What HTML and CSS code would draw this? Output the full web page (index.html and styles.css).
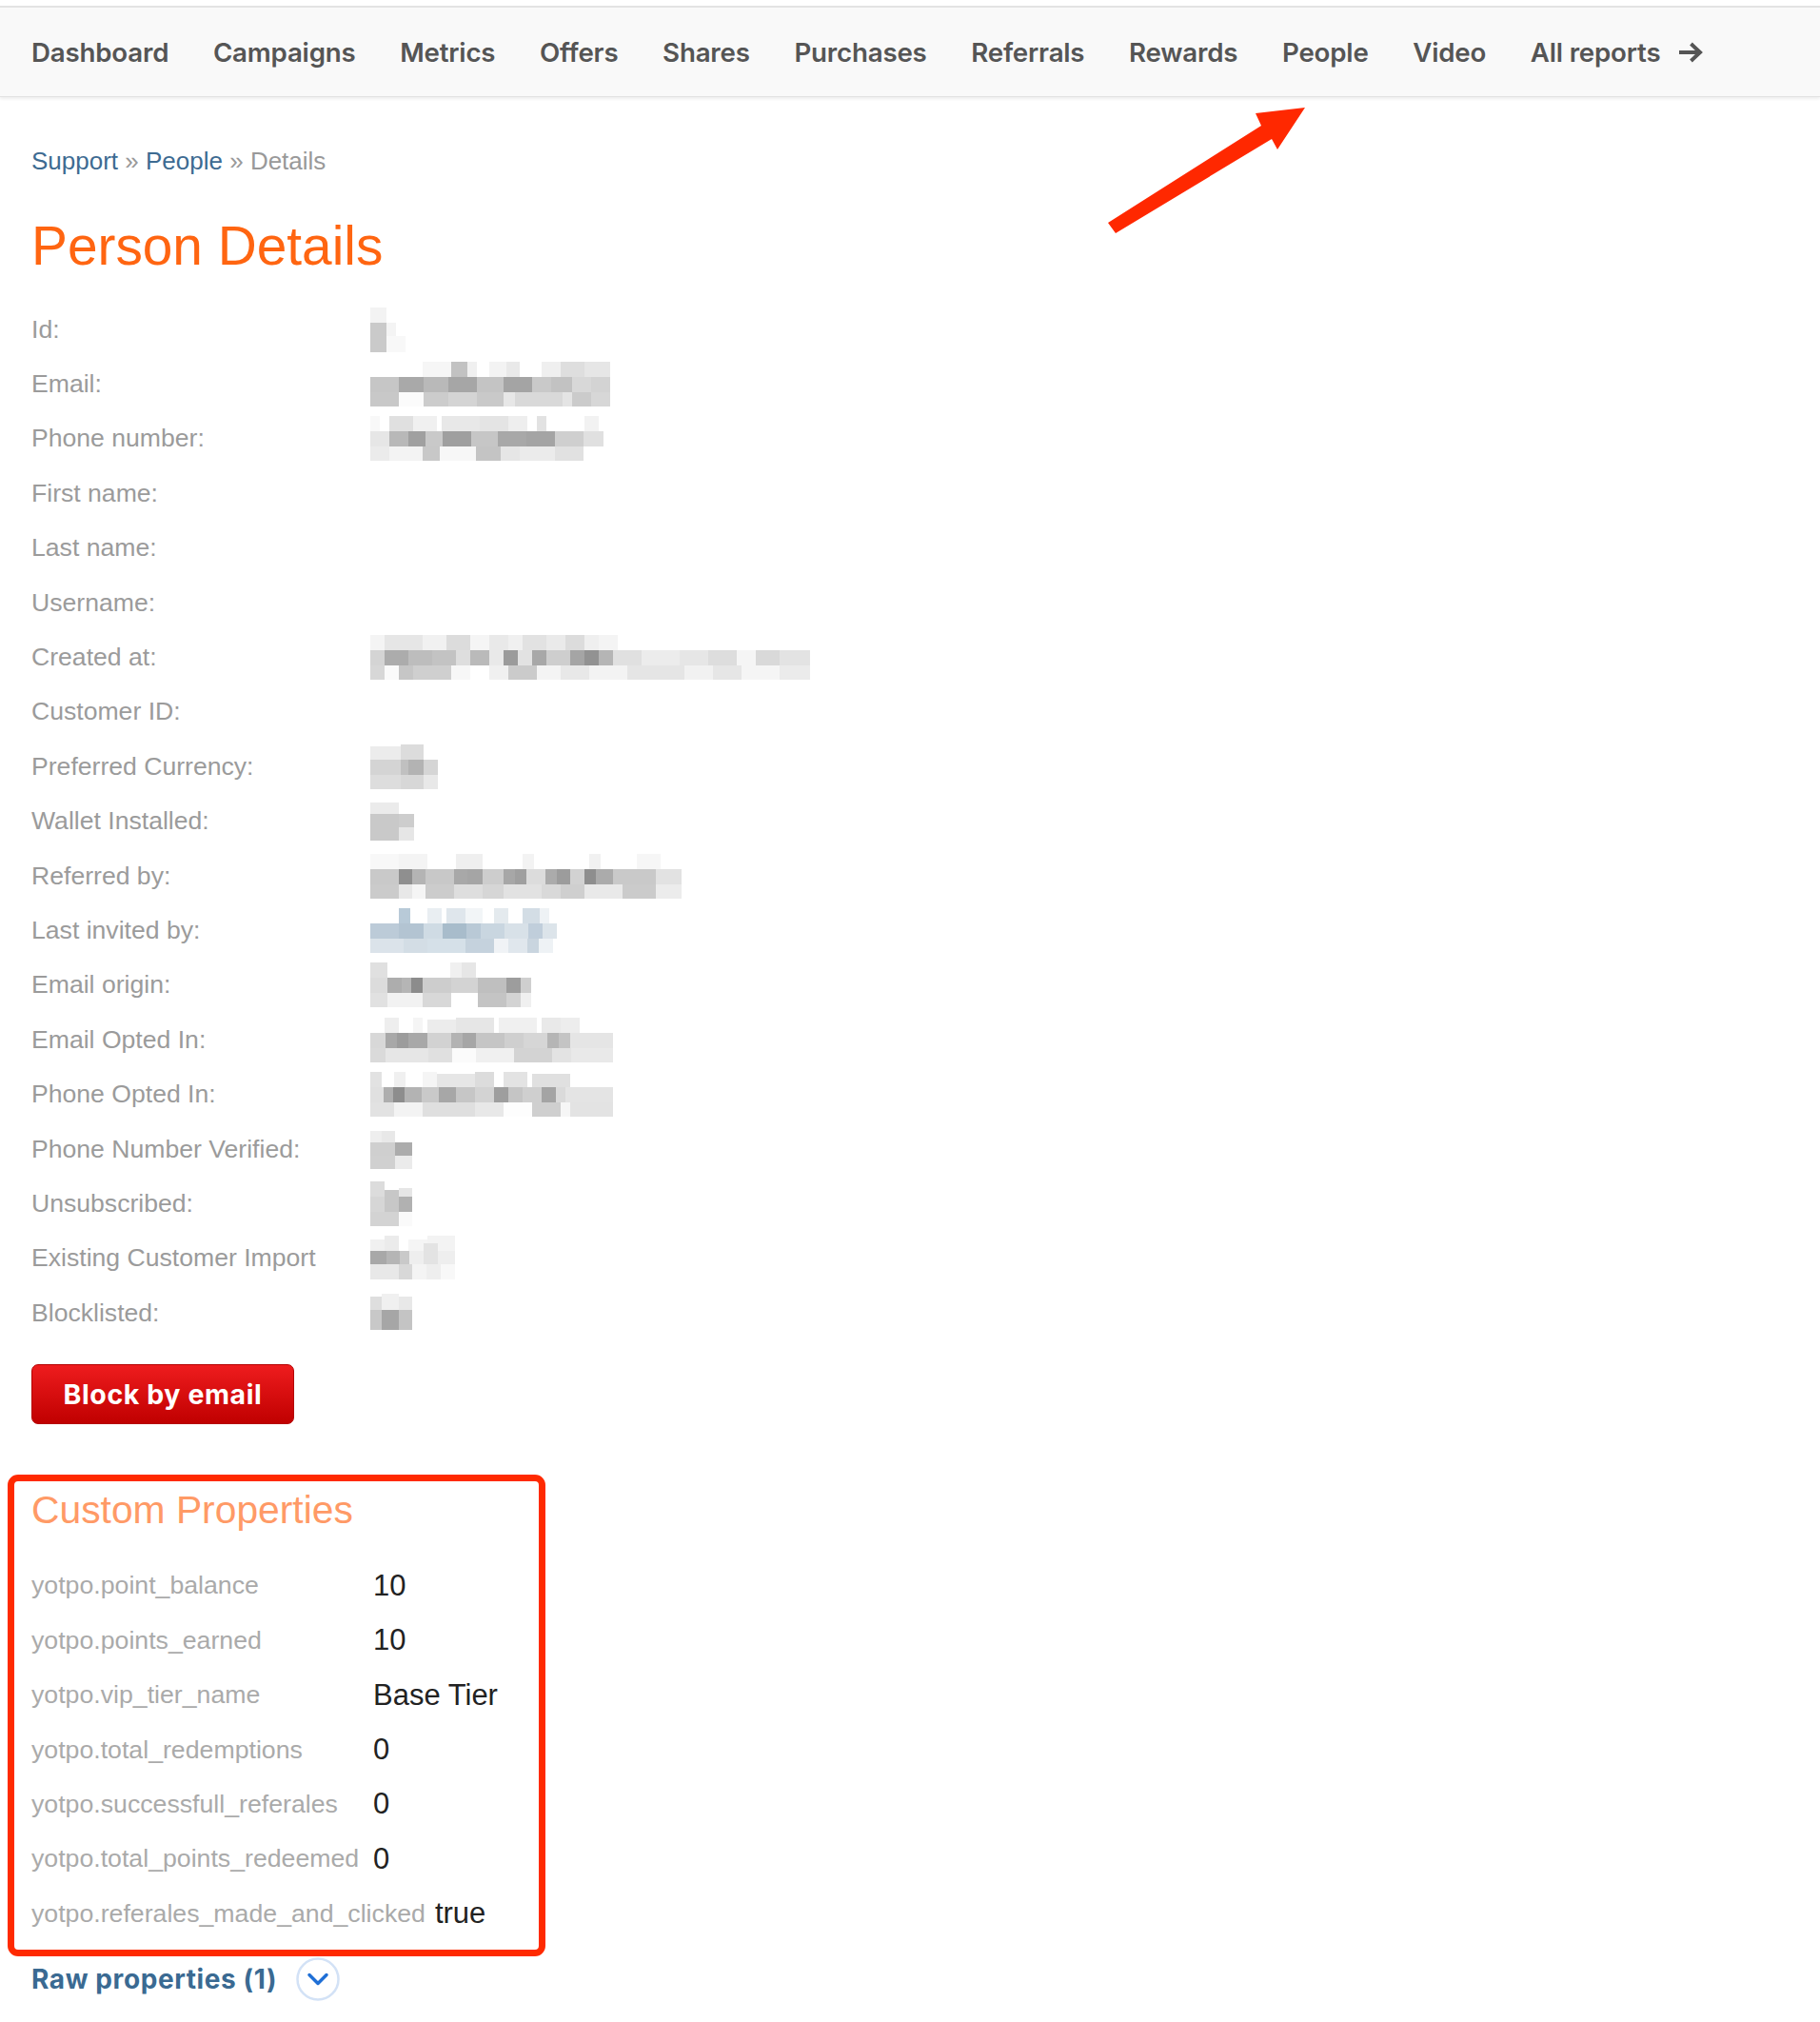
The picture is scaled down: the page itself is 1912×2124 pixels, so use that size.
FILE: index.html
```html
<!DOCTYPE html>
<html lang="en">
<head>
<meta charset="utf-8">
<title>Person Details</title>
<link rel="stylesheet" href="styles.css">
</head>
<body>
<header class="topbar">
  <nav class="nav">
    <a href="#">Dashboard</a>
    <a href="#">Campaigns</a>
    <a href="#">Metrics</a>
    <a href="#">Offers</a>
    <a href="#">Shares</a>
    <a href="#">Purchases</a>
    <a href="#">Referrals</a>
    <a href="#">Rewards</a>
    <a href="#">People</a>
    <a href="#">Video</a>
    <a href="#" class="all-reports">All reports
      <svg class="nav-arrow" viewBox="0 0 26 22" width="26" height="22"><path d="M1 11 H23 M13.5 2 L23 11 L13.5 20" fill="none" stroke="#555" stroke-width="4" stroke-linejoin="miter"/></svg>
    </a>
  </nav>
</header>

<svg class="annot-arrow" width="215" height="142" viewBox="0 0 215 142"><polygon points="4,126 12,137 176,38 182,49 211,5 159,11 165,24" fill="#ff2800"/></svg>

<main class="page">
  <div class="crumbs"><a href="#">Support</a> » <a href="#">People</a> » Details</div>
  <h1 class="title">Person Details</h1>

  <div class="details">
    <div class="row"><span class="label">Id:</span><span class="value"><svg class="blur" width="40" height="47" viewBox="0 0 40 47"><rect x="0" y="0" width="17" height="16" fill="#f3f3f3"/><rect x="0" y="16" width="17" height="31" fill="#cacaca"/><rect x="17" y="16" width="10" height="14" fill="#f4f4f4"/><rect x="17" y="30" width="20" height="17" fill="#f8f8f8"/></svg></span></div>

    <div class="row"><span class="label">Email:</span><span class="value"><svg class="blur" width="252" height="47" viewBox="0 0 252 47">
      <rect x="55" y="0" width="30" height="16" fill="#f6f6f6"/><rect x="85" y="0" width="17" height="16" fill="#c2c2c2"/><rect x="102" y="0" width="10" height="16" fill="#f0f0f0"/><rect x="125" y="0" width="18" height="16" fill="#f3f3f3"/><rect x="143" y="0" width="14" height="16" fill="#e9e9e9"/><rect x="180" y="0" width="20" height="16" fill="#efefef"/><rect x="200" y="0" width="25" height="16" fill="#dedede"/><rect x="225" y="0" width="27" height="16" fill="#e6e6e6"/>
      <rect x="0" y="16" width="30" height="16" fill="#c6c6c6"/><rect x="30" y="16" width="26" height="16" fill="#a9a9a9"/><rect x="56" y="16" width="26" height="16" fill="#b9b9b9"/><rect x="82" y="16" width="30" height="16" fill="#a6a6a6"/><rect x="112" y="16" width="28" height="16" fill="#c4c4c4"/><rect x="140" y="16" width="30" height="16" fill="#a4a4a4"/><rect x="170" y="16" width="20" height="16" fill="#c9c9c9"/><rect x="190" y="16" width="22" height="16" fill="#c2c2c2"/><rect x="212" y="16" width="20" height="16" fill="#d8d8d8"/><rect x="232" y="16" width="20" height="16" fill="#d3d3d3"/>
      <rect x="0" y="32" width="30" height="15" fill="#c8c8c8"/><rect x="30" y="32" width="26" height="15" fill="#fbfbfb"/><rect x="56" y="32" width="26" height="15" fill="#cccccc"/><rect x="82" y="32" width="30" height="15" fill="#d4d4d4"/><rect x="112" y="32" width="28" height="15" fill="#c9c9c9"/><rect x="140" y="32" width="12" height="15" fill="#e7e7e7"/><rect x="152" y="32" width="50" height="15" fill="#d9d9d9"/><rect x="202" y="32" width="10" height="15" fill="#e4e4e4"/><rect x="212" y="32" width="20" height="15" fill="#cbcbcb"/><rect x="232" y="32" width="20" height="15" fill="#d7d7d7"/>
    </svg></span></div>

    <div class="row"><span class="label">Phone number:</span><span class="value"><svg class="blur" width="245" height="47" viewBox="0 0 245 47">
      <rect x="0" y="0" width="10" height="16" fill="#f8f8f8"/><rect x="20" y="0" width="25" height="16" fill="#e0e0e0"/><rect x="45" y="0" width="25" height="16" fill="#f0f0f0"/><rect x="75" y="0" width="40" height="16" fill="#e8e8e8"/><rect x="115" y="0" width="30" height="16" fill="#e4e4e4"/><rect x="145" y="0" width="20" height="16" fill="#eeeeee"/><rect x="175" y="0" width="10" height="16" fill="#e2e2e2"/><rect x="225" y="0" width="15" height="16" fill="#f2f2f2"/>
      <rect x="0" y="16" width="20" height="16" fill="#e6e6e6"/><rect x="20" y="16" width="20" height="16" fill="#b8b8b8"/><rect x="40" y="16" width="18" height="16" fill="#a0a0a0"/><rect x="58" y="16" width="18" height="16" fill="#c9c9c9"/><rect x="76" y="16" width="30" height="16" fill="#9f9f9f"/><rect x="106" y="16" width="28" height="16" fill="#c6c6c6"/><rect x="134" y="16" width="30" height="16" fill="#a8a8a8"/><rect x="164" y="16" width="30" height="16" fill="#a4a4a4"/><rect x="194" y="16" width="30" height="16" fill="#cfcfcf"/><rect x="224" y="16" width="21" height="16" fill="#e0e0e0"/>
      <rect x="0" y="32" width="20" height="15" fill="#ebebeb"/><rect x="20" y="32" width="35" height="15" fill="#f3f3f3"/><rect x="55" y="32" width="18" height="15" fill="#c8c8c8"/><rect x="73" y="32" width="38" height="15" fill="#f7f7f7"/><rect x="111" y="32" width="26" height="15" fill="#c4c4c4"/><rect x="137" y="32" width="20" height="15" fill="#e6e6e6"/><rect x="157" y="32" width="37" height="15" fill="#ebebeb"/><rect x="194" y="32" width="30" height="15" fill="#e1e1e1"/>
    </svg></span></div>

    <div class="row"><span class="label">First name:</span><span class="value"></span></div>
    <div class="row"><span class="label">Last name:</span><span class="value"></span></div>
    <div class="row"><span class="label">Username:</span><span class="value"></span></div>

    <div class="row"><span class="label">Created at:</span><span class="value"><svg class="blur" width="462" height="47" viewBox="0 0 462 47">
      <rect x="0" y="0" width="15" height="16" fill="#f4f4f4"/><rect x="15" y="0" width="40" height="16" fill="#e6e6e6"/><rect x="55" y="0" width="25" height="16" fill="#f1f1f1"/><rect x="80" y="0" width="25" height="16" fill="#dcdcdc"/><rect x="105" y="0" width="20" height="16" fill="#f5f5f5"/><rect x="125" y="0" width="20" height="16" fill="#e9e9e9"/><rect x="145" y="0" width="15" height="16" fill="#f0f0f0"/><rect x="160" y="0" width="25" height="16" fill="#e2e2e2"/><rect x="185" y="0" width="20" height="16" fill="#eaeaea"/><rect x="205" y="0" width="20" height="16" fill="#dcdcdc"/><rect x="225" y="0" width="15" height="16" fill="#efefef"/><rect x="240" y="0" width="20" height="16" fill="#f4f4f4"/>
      <rect x="0" y="16" width="15" height="16" fill="#d4d4d4"/><rect x="15" y="16" width="25" height="16" fill="#acacac"/><rect x="40" y="16" width="25" height="16" fill="#bdbdbd"/><rect x="65" y="16" width="25" height="16" fill="#c3c3c3"/><rect x="90" y="16" width="15" height="16" fill="#dedede"/><rect x="105" y="16" width="20" height="16" fill="#bababa"/><rect x="125" y="16" width="15" height="16" fill="#e9e9e9"/><rect x="140" y="16" width="15" height="16" fill="#9b9b9b"/><rect x="155" y="16" width="15" height="16" fill="#e2e2e2"/><rect x="170" y="16" width="15" height="16" fill="#a8a8a8"/><rect x="185" y="16" width="25" height="16" fill="#cecece"/><rect x="210" y="16" width="15" height="16" fill="#a5a5a5"/><rect x="225" y="16" width="15" height="16" fill="#929292"/><rect x="240" y="16" width="15" height="16" fill="#b5b5b5"/><rect x="255" y="16" width="30" height="16" fill="#e0e0e0"/><rect x="285" y="16" width="40" height="16" fill="#ececec"/><rect x="325" y="16" width="30" height="16" fill="#e6e6e6"/><rect x="355" y="16" width="30" height="16" fill="#dddddd"/><rect x="385" y="16" width="20" height="16" fill="#f5f5f5"/><rect x="405" y="16" width="25" height="16" fill="#d9d9d9"/><rect x="430" y="16" width="32" height="16" fill="#e3e3e3"/>
      <rect x="0" y="32" width="15" height="15" fill="#d7d7d7"/><rect x="15" y="32" width="15" height="15" fill="#fafafa"/><rect x="30" y="32" width="15" height="15" fill="#c6c6c6"/><rect x="45" y="32" width="40" height="15" fill="#cfcfcf"/><rect x="85" y="32" width="20" height="15" fill="#f7f7f7"/><rect x="125" y="32" width="20" height="15" fill="#f0f0f0"/><rect x="145" y="32" width="30" height="15" fill="#cbcbcb"/><rect x="175" y="32" width="25" height="15" fill="#f4f4f4"/><rect x="200" y="32" width="30" height="15" fill="#e8e8e8"/><rect x="230" y="32" width="40" height="15" fill="#f3f3f3"/><rect x="270" y="32" width="60" height="15" fill="#e5e5e5"/><rect x="330" y="32" width="30" height="15" fill="#f1f1f1"/><rect x="360" y="32" width="30" height="15" fill="#e6e6e6"/><rect x="390" y="32" width="40" height="15" fill="#f5f5f5"/><rect x="430" y="32" width="32" height="15" fill="#ebebeb"/>
    </svg></span></div>

    <div class="row"><span class="label">Customer ID:</span><span class="value"></span></div>

    <div class="row"><span class="label">Preferred Currency:</span><span class="value"><svg class="blur" width="71" height="47" viewBox="0 0 71 47">
      <rect x="0" y="2" width="32" height="14" fill="#ececec"/><rect x="32" y="0" width="24" height="16" fill="#dcdcdc"/>
      <rect x="0" y="16" width="32" height="16" fill="#d4d4d4"/><rect x="32" y="16" width="8" height="16" fill="#c0c0c0"/><rect x="40" y="16" width="16" height="16" fill="#b3b3b3"/><rect x="56" y="16" width="15" height="16" fill="#d5d5d5"/>
      <rect x="0" y="32" width="32" height="15" fill="#dddddd"/><rect x="32" y="32" width="24" height="15" fill="#d7d7d7"/><rect x="56" y="32" width="15" height="15" fill="#e8e8e8"/>
    </svg></span></div>

    <div class="row"><span class="label">Wallet Installed:</span><span class="value"><svg class="blur" width="46" height="47" viewBox="0 0 46 47">
      <rect x="0" y="4" width="30" height="12" fill="#ebebeb"/><rect x="0" y="16" width="30" height="28" fill="#c9c9c9"/><rect x="30" y="16" width="16" height="14" fill="#cdcdcd"/><rect x="30" y="30" width="16" height="14" fill="#e6e6e6"/>
    </svg></span></div>

    <div class="row"><span class="label">Referred by:</span><span class="value"><svg class="blur" width="327" height="47" viewBox="0 0 327 47">
      <rect x="0" y="0" width="30" height="16" fill="#f8f8f8"/><rect x="30" y="0" width="30" height="16" fill="#f4f4f4"/><rect x="90" y="0" width="28" height="16" fill="#efefef"/><rect x="160" y="0" width="12" height="16" fill="#f3f3f3"/><rect x="230" y="0" width="12" height="16" fill="#f1f1f1"/><rect x="280" y="0" width="25" height="16" fill="#f6f6f6"/>
      <rect x="0" y="16" width="30" height="16" fill="#c9c9c9"/><rect x="30" y="16" width="14" height="16" fill="#8f8f8f"/><rect x="44" y="16" width="14" height="16" fill="#b4b4b4"/><rect x="58" y="16" width="30" height="16" fill="#c8c8c8"/><rect x="88" y="16" width="14" height="16" fill="#a8a8a8"/><rect x="102" y="16" width="16" height="16" fill="#a5a5a5"/><rect x="118" y="16" width="22" height="16" fill="#cdcdcd"/><rect x="140" y="16" width="12" height="16" fill="#a7a7a7"/><rect x="152" y="16" width="12" height="16" fill="#9f9f9f"/><rect x="164" y="16" width="20" height="16" fill="#dcdcdc"/><rect x="184" y="16" width="12" height="16" fill="#ababab"/><rect x="196" y="16" width="14" height="16" fill="#9c9c9c"/><rect x="210" y="16" width="15" height="16" fill="#d2d2d2"/><rect x="225" y="16" width="12" height="16" fill="#8e8e8e"/><rect x="237" y="16" width="18" height="16" fill="#ababab"/><rect x="255" y="16" width="45" height="16" fill="#c9c9c9"/><rect x="300" y="16" width="27" height="16" fill="#e2e2e2"/>
      <rect x="0" y="32" width="30" height="15" fill="#cbcbcb"/><rect x="30" y="32" width="14" height="15" fill="#e8e8e8"/><rect x="44" y="32" width="14" height="15" fill="#f5f5f5"/><rect x="58" y="32" width="30" height="15" fill="#cccccc"/><rect x="88" y="32" width="30" height="15" fill="#dedede"/><rect x="118" y="32" width="22" height="15" fill="#d6d6d6"/><rect x="140" y="32" width="40" height="15" fill="#e2e2e2"/><rect x="180" y="32" width="20" height="15" fill="#d9d9d9"/><rect x="200" y="32" width="25" height="15" fill="#cfcfcf"/><rect x="225" y="32" width="40" height="15" fill="#e9e9e9"/><rect x="265" y="32" width="35" height="15" fill="#cbcbcb"/><rect x="300" y="32" width="27" height="15" fill="#ececec"/>
    </svg></span></div>

    <div class="row"><span class="label">Last invited by:</span><span class="value"><svg class="blur" width="213" height="47" viewBox="0 0 213 47">
      <rect x="30" y="0" width="12" height="16" fill="#b8cad8"/><rect x="60" y="0" width="15" height="16" fill="#e9eef2"/><rect x="80" y="0" width="20" height="16" fill="#dfe6ec"/><rect x="100" y="0" width="18" height="16" fill="#f2f5f7"/><rect x="130" y="0" width="15" height="16" fill="#e4eaee"/><rect x="160" y="0" width="18" height="16" fill="#d3dde5"/><rect x="178" y="0" width="10" height="16" fill="#eef2f5"/>
      <rect x="0" y="16" width="30" height="16" fill="#bccbd8"/><rect x="30" y="16" width="26" height="16" fill="#b3c4d2"/><rect x="56" y="16" width="20" height="16" fill="#cfdbe4"/><rect x="76" y="16" width="25" height="16" fill="#a8bccb"/><rect x="101" y="16" width="15" height="16" fill="#b9c9d6"/><rect x="116" y="16" width="25" height="16" fill="#c9d6e0"/><rect x="141" y="16" width="25" height="16" fill="#d8e1e8"/><rect x="166" y="16" width="15" height="16" fill="#c0cedb"/><rect x="181" y="16" width="15" height="16" fill="#dce4ea"/>
      <rect x="0" y="32" width="35" height="15" fill="#dbe3ea"/><rect x="35" y="32" width="25" height="15" fill="#d3dde5"/><rect x="60" y="32" width="40" height="15" fill="#d5e0e8"/><rect x="100" y="32" width="30" height="15" fill="#c5d2dd"/><rect x="130" y="32" width="15" height="15" fill="#f0f3f6"/><rect x="145" y="32" width="20" height="15" fill="#e0e7ed"/><rect x="165" y="32" width="12" height="15" fill="#c9d5df"/><rect x="177" y="32" width="15" height="15" fill="#eef2f5"/>
    </svg></span></div>

    <div class="row"><span class="label">Email origin:</span><span class="value"><svg class="blur" width="169" height="47" viewBox="0 0 169 47">
      <rect x="0" y="0" width="18" height="16" fill="#e0e0e0"/><rect x="84" y="0" width="12" height="16" fill="#f0f0f0"/><rect x="96" y="0" width="15" height="16" fill="#e6e6e6"/>
      <rect x="0" y="16" width="18" height="16" fill="#dcdcdc"/><rect x="18" y="16" width="15" height="16" fill="#adadad"/><rect x="33" y="16" width="10" height="16" fill="#b5b5b5"/><rect x="43" y="16" width="12" height="16" fill="#8c8c8c"/><rect x="55" y="16" width="30" height="16" fill="#cdcdcd"/><rect x="85" y="16" width="28" height="16" fill="#d3d3d3"/><rect x="113" y="16" width="30" height="16" fill="#bfbfbf"/><rect x="143" y="16" width="15" height="16" fill="#9d9d9d"/><rect x="158" y="16" width="11" height="16" fill="#cfcfcf"/>
      <rect x="0" y="32" width="18" height="15" fill="#e1e1e1"/><rect x="18" y="32" width="37" height="15" fill="#f2f2f2"/><rect x="55" y="32" width="30" height="15" fill="#d8d8d8"/><rect x="113" y="32" width="30" height="15" fill="#c4c4c4"/><rect x="143" y="32" width="15" height="15" fill="#d3d3d3"/><rect x="158" y="32" width="11" height="15" fill="#f0f0f0"/>
    </svg></span></div>

    <div class="row"><span class="label">Email Opted In:</span><span class="value"><svg class="blur" width="255" height="47" viewBox="0 0 255 47">
      <rect x="15" y="0" width="15" height="16" fill="#eeeeee"/><rect x="45" y="0" width="10" height="16" fill="#f5f5f5"/><rect x="60" y="2" width="30" height="14" fill="#ececec"/><rect x="90" y="0" width="40" height="16" fill="#e6e6e6"/><rect x="135" y="0" width="40" height="16" fill="#f0f0f0"/><rect x="180" y="0" width="20" height="16" fill="#e9e9e9"/><rect x="200" y="0" width="20" height="16" fill="#ededed"/>
      <rect x="0" y="16" width="16" height="16" fill="#d8d8d8"/><rect x="16" y="16" width="12" height="16" fill="#a8a8a8"/><rect x="28" y="16" width="12" height="16" fill="#9c9c9c"/><rect x="40" y="16" width="20" height="16" fill="#a8a8a8"/><rect x="60" y="16" width="25" height="16" fill="#d2d2d2"/><rect x="85" y="16" width="12" height="16" fill="#b3b3b3"/><rect x="97" y="16" width="14" height="16" fill="#a6a6a6"/><rect x="111" y="16" width="30" height="16" fill="#c5c5c5"/><rect x="141" y="16" width="20" height="16" fill="#cfcfcf"/><rect x="161" y="16" width="25" height="16" fill="#d6d6d6"/><rect x="186" y="16" width="12" height="16" fill="#b5b5b5"/><rect x="198" y="16" width="12" height="16" fill="#c4c4c4"/><rect x="210" y="16" width="45" height="16" fill="#e5e5e5"/>
      <rect x="0" y="32" width="16" height="15" fill="#dadada"/><rect x="16" y="32" width="45" height="15" fill="#e6e6e6"/><rect x="61" y="32" width="25" height="15" fill="#e0e0e0"/><rect x="86" y="32" width="25" height="15" fill="#fbfbfb"/><rect x="111" y="32" width="40" height="15" fill="#f0f0f0"/><rect x="151" y="32" width="40" height="15" fill="#d3d3d3"/><rect x="191" y="32" width="20" height="15" fill="#e3e3e3"/><rect x="211" y="32" width="44" height="15" fill="#e9e9e9"/>
    </svg></span></div>

    <div class="row"><span class="label">Phone Opted In:</span><span class="value"><svg class="blur" width="255" height="47" viewBox="0 0 255 47">
      <rect x="0" y="0" width="12" height="16" fill="#e2e2e2"/><rect x="25" y="0" width="12" height="16" fill="#f0f0f0"/><rect x="55" y="0" width="15" height="16" fill="#f5f5f5"/><rect x="70" y="2" width="40" height="14" fill="#e6e6e6"/><rect x="110" y="0" width="20" height="16" fill="#dcdcdc"/><rect x="140" y="0" width="25" height="16" fill="#e3e3e3"/><rect x="170" y="2" width="40" height="14" fill="#e0e0e0"/>
      <rect x="0" y="16" width="14" height="16" fill="#e0e0e0"/><rect x="14" y="16" width="10" height="16" fill="#aeaeae"/><rect x="24" y="16" width="12" height="16" fill="#8d8d8d"/><rect x="36" y="16" width="18" height="16" fill="#b3b3b3"/><rect x="54" y="16" width="18" height="16" fill="#c9c9c9"/><rect x="72" y="16" width="18" height="16" fill="#a7a7a7"/><rect x="90" y="16" width="20" height="16" fill="#c6c6c6"/><rect x="110" y="16" width="20" height="16" fill="#d3d3d3"/><rect x="130" y="16" width="15" height="16" fill="#9e9e9e"/><rect x="145" y="16" width="15" height="16" fill="#c5c5c5"/><rect x="160" y="16" width="20" height="16" fill="#cfcfcf"/><rect x="180" y="16" width="15" height="16" fill="#a4a4a4"/><rect x="195" y="16" width="10" height="16" fill="#dadada"/><rect x="205" y="16" width="50" height="16" fill="#e4e4e4"/>
      <rect x="0" y="32" width="25" height="15" fill="#e2e2e2"/><rect x="25" y="32" width="30" height="15" fill="#f3f3f3"/><rect x="55" y="32" width="55" height="15" fill="#dfdfdf"/><rect x="110" y="32" width="30" height="15" fill="#e8e8e8"/><rect x="140" y="32" width="30" height="15" fill="#fdfdfd"/><rect x="170" y="32" width="30" height="15" fill="#cfcfcf"/><rect x="200" y="32" width="10" height="15" fill="#f6f6f6"/><rect x="210" y="32" width="45" height="15" fill="#e3e3e3"/>
    </svg></span></div>

    <div class="row"><span class="label">Phone Number Verified:</span><span class="value"><svg class="blur" width="44" height="47" viewBox="0 0 44 47">
      <rect x="0" y="4" width="12" height="12" fill="#eeeeee"/><rect x="12" y="4" width="14" height="12" fill="#e8e8e8"/>
      <rect x="0" y="16" width="26" height="14" fill="#cfcfcf"/><rect x="26" y="16" width="18" height="14" fill="#acacac"/>
      <rect x="0" y="30" width="26" height="14" fill="#d0d0d0"/><rect x="26" y="30" width="18" height="14" fill="#ebebeb"/>
    </svg></span></div>

    <div class="row"><span class="label">Unsubscribed:</span><span class="value"><svg class="blur" width="44" height="47" viewBox="0 0 44 47">
      <rect x="0" y="0" width="15" height="16" fill="#dcdcdc"/><rect x="30" y="7" width="14" height="9" fill="#e6e6e6"/>
      <rect x="0" y="16" width="15" height="16" fill="#d6d6d6"/><rect x="15" y="9" width="15" height="23" fill="#c7c7c7"/><rect x="30" y="16" width="14" height="16" fill="#b1b1b1"/>
      <rect x="0" y="32" width="30" height="15" fill="#d3d3d3"/><rect x="30" y="32" width="14" height="15" fill="#fafafa"/>
    </svg></span></div>

    <div class="row"><span class="label">Existing Customer Import</span><span class="value"><svg class="blur" width="89" height="47" viewBox="0 0 89 47">
      <rect x="0" y="4" width="15" height="12" fill="#f0f0f0"/><rect x="15" y="0" width="15" height="16" fill="#ebebeb"/><rect x="40" y="4" width="20" height="12" fill="#f5f5f5"/><rect x="60" y="0" width="29" height="16" fill="#f3f3f3"/>
      <rect x="0" y="16" width="17" height="14" fill="#a8a8a8"/><rect x="17" y="16" width="14" height="14" fill="#b5b5b5"/><rect x="31" y="16" width="10" height="14" fill="#c9c9c9"/><rect x="41" y="16" width="15" height="14" fill="#eeeeee"/><rect x="56" y="8" width="15" height="22" fill="#e3e3e3"/><rect x="71" y="16" width="18" height="14" fill="#eeeeee"/>
      <rect x="0" y="30" width="30" height="16" fill="#e8e8e8"/><rect x="30" y="30" width="14" height="16" fill="#d8d8d8"/><rect x="44" y="30" width="15" height="16" fill="#f4f4f4"/><rect x="59" y="30" width="15" height="16" fill="#eeeeee"/><rect x="74" y="30" width="15" height="16" fill="#f8f8f8"/>
    </svg></span></div>

    <div class="row"><span class="label">Blocklisted:</span><span class="value"><svg class="blur" width="44" height="47" viewBox="0 0 44 47">
      <rect x="0" y="6" width="12" height="14" fill="#dedede"/><rect x="12" y="3" width="18" height="17" fill="#f0f0f0"/><rect x="30" y="6" width="14" height="14" fill="#e8e8e8"/>
      <rect x="0" y="20" width="12" height="21" fill="#c8c8c8"/><rect x="12" y="20" width="18" height="21" fill="#a6a6a6"/><rect x="30" y="20" width="14" height="21" fill="#c4c4c4"/>
    </svg></span></div>
  </div>

  <button class="btn-block" type="button">Block by email</button>

  <section class="custom">
    <h2 class="custom-title">Custom Properties</h2>
    <div class="prow"><span class="plabel">yotpo.point_balance</span><span class="pvalue">10</span></div>
    <div class="prow"><span class="plabel">yotpo.points_earned</span><span class="pvalue">10</span></div>
    <div class="prow"><span class="plabel">yotpo.vip_tier_name</span><span class="pvalue">Base Tier</span></div>
    <div class="prow"><span class="plabel">yotpo.total_redemptions</span><span class="pvalue">0</span></div>
    <div class="prow"><span class="plabel">yotpo.successfull_referales</span><span class="pvalue">0</span></div>
    <div class="prow"><span class="plabel">yotpo.total_points_redeemed</span><span class="pvalue">0</span></div>
    <div class="prow"><span class="plabel">yotpo.referales_made_and_clicked</span><span class="pvalue">true</span></div>
  </section>

  <div class="raw">
    <span class="raw-label">Raw properties (1)</span>
    <svg class="raw-toggle" width="46" height="46" viewBox="0 0 46 46"><circle cx="23" cy="23" r="21.5" fill="#fff" stroke="#d3e2f6" stroke-width="2.5"/><path d="M14 18.5 L23 27.5 L32 18.5" fill="none" stroke="#1f6fd6" stroke-width="3.5" stroke-linecap="round" stroke-linejoin="round"/></svg>
  </div>
</main>
</body>
</html>
```

FILE: styles.css
```css
html, body {
  margin: 0;
  padding: 0;
  background: #ffffff;
}

body {
  font-family: "Liberation Sans", Arial, Helvetica, sans-serif;
  color: #222;
  position: relative;
}

a {
  text-decoration: none;
}

/* ---------- top navigation ---------- */
.topbar {
  margin-top: 6px;
  height: 96px;
  box-sizing: border-box;
  border-top: 2px solid #e3e3e3;
  border-bottom: 1px solid #e2e2e2;
  background: #f9f9f9;
  box-shadow: 0 2px 3px rgba(0, 0, 0, 0.07);
}

.nav {
  display: flex;
  align-items: center;
  height: 100%;
  padding-left: 33px;
  gap: 46.7px;
  font-family: "Inter", "Lato", sans-serif;
  font-weight: 600;
  font-size: 27.7px;
  letter-spacing: -0.2px;
}

.nav a {
  color: #555;
  white-space: nowrap;
}

.all-reports {
  display: inline-flex;
  align-items: center;
  gap: 19px;
}

.nav-arrow {
  display: block;
}

/* ---------- annotation arrow ---------- */
.annot-arrow {
  position: absolute;
  left: 1160px;
  top: 108px;
}

/* ---------- page ---------- */
.page {
  padding: 0 33px;
}

.crumbs {
  margin-top: 52px;
  font-size: 26px;
  line-height: 30px;
  color: #999;
}

.crumbs a {
  color: #3d6b92;
}

.title {
  margin: 42.5px 0 27px;
  font-size: 56.8px;
  line-height: 64px;
  font-weight: normal;
  color: #ff6511;
}

/* ---------- details list ---------- */
.details {
  display: flex;
  flex-direction: column;
}

.row {
  display: grid;
  grid-template-columns: 356px 1fr;
  align-items: center;
  height: 57.4px;
}

.label {
  font-size: 26.6px;
  color: #9b9b9b;
  white-space: nowrap;
}

.value {
  display: flex;
  align-items: center;
}

.blur {
  display: block;
}

/* ---------- button ---------- */
.btn-block {
  display: block;
  margin-top: 25px;
  width: 276px;
  height: 63px;
  border: 1px solid #b40000;
  border-radius: 7px;
  background: linear-gradient(#ee1c1e, #c00000);
  color: #fff;
  font-family: "Inter", "Lato", sans-serif;
  font-weight: 700;
  font-size: 28.5px;
  letter-spacing: 0.6px;
  padding: 0;
  cursor: pointer;
}

/* ---------- custom properties (annotated box) ---------- */
.custom {
  margin-top: 53px;
  margin-left: -25px;
  width: 565px;
  box-sizing: border-box;
  border: 7px solid #ff2a00;
  border-radius: 11px;
  padding: 6px 18px 9px;
}

.custom-title {
  margin: 0 0 27.3px;
  font-size: 40.8px;
  line-height: 48px;
  font-weight: normal;
  color: #ff9a66;
}

.prow {
  display: flex;
  align-items: center;
  height: 57.4px;
}

.plabel {
  min-width: 349px;
  margin-right: 10px;
  font-size: 26.7px;
  color: #aaaaaa;
  white-space: nowrap;
}

.pvalue {
  font-size: 31px;
  color: #222;
}

/* ---------- raw properties ---------- */
.raw {
  display: flex;
  align-items: center;
  gap: 20px;
  margin-top: 1px;
  height: 46px;
}

.raw-label {
  font-family: "Inter", "Lato", sans-serif;
  font-weight: 700;
  font-size: 28px;
  letter-spacing: 0.6px;
  color: #3a6a92;
}

.raw-toggle {
  display: block;
}
```
